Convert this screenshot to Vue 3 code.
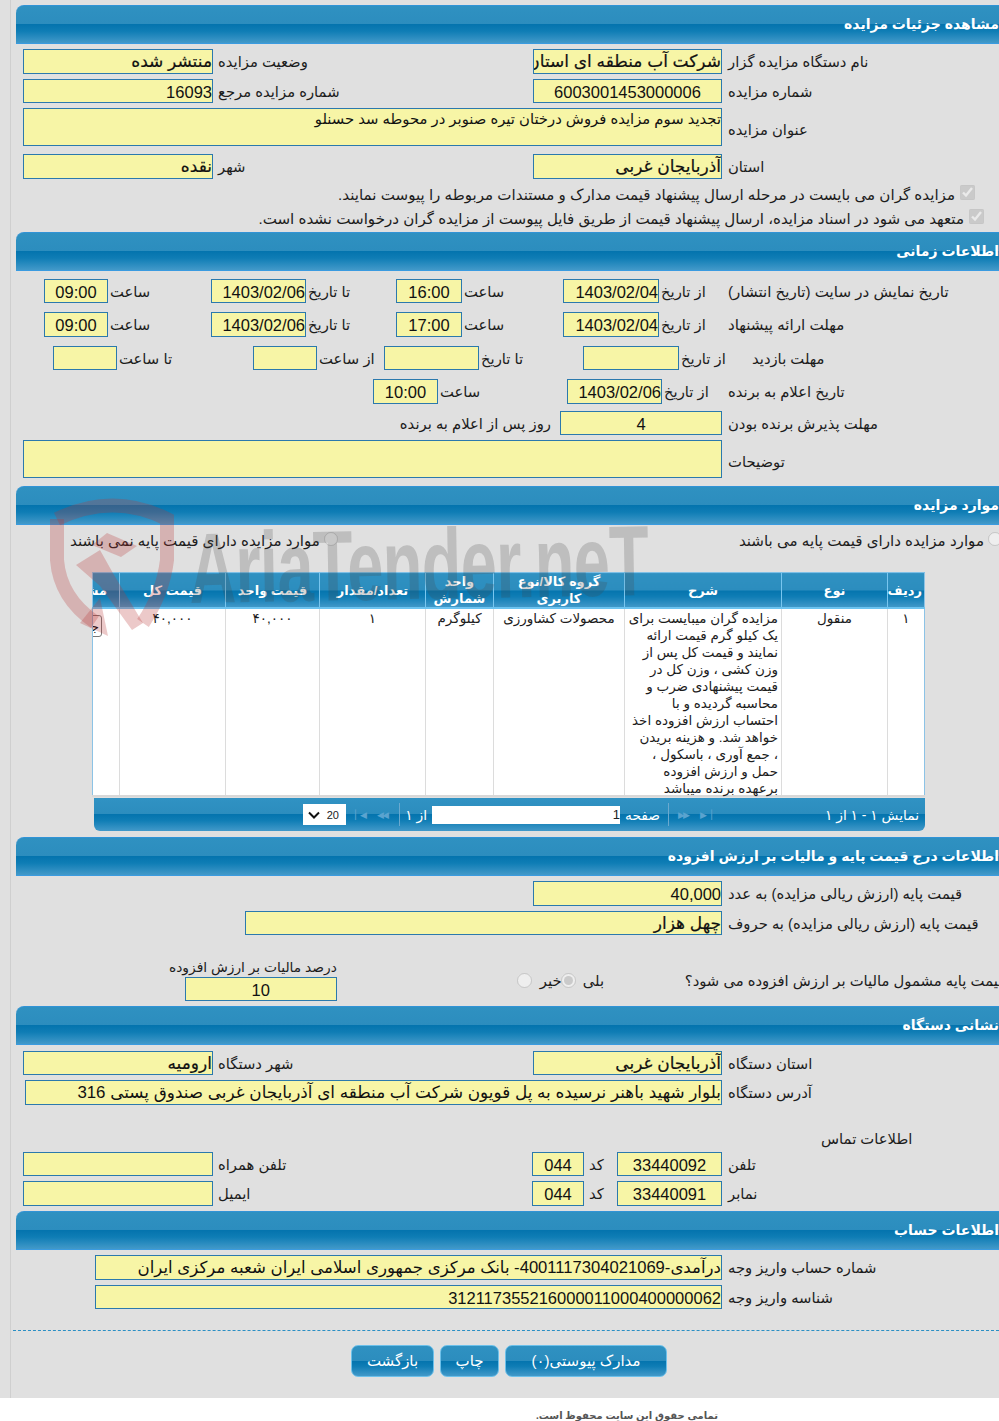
<script setup>
const cols = [
  { t: 'ردیف', w: 37 }, { t: 'نوع', w: 106 }, { t: 'شرح', w: 157 }, { t: 'گروه کالا/نوع کاربری', w: 131 },
  { t: 'واحد شمارش', w: 68 }, { t: 'تعداد/مقدار', w: 106 }, { t: 'قیمت واحد', w: 94 }, { t: 'قیمت کل', w: 106 }, { t: 'مشاهده', w: 27 }
]
const desc = [
  'مزایده گران میبایست برای', 'یک کیلو گرم قیمت ارائه', 'نمایند و قیمت کل پس از', 'وزن کشی ، وزن کل در',
  'قیمت پیشنهادی ضرب و', 'محاسبه گردیده و با', 'احتساب ارزش افزوده اخذ', 'خواهد شد. و هزینه بریدن',
  '، جمع آوری ، باسکول ،', 'حمل و ارزش افزوده', 'برعهده برنده میباشد'
].join('\n')
</script>

<template>
  <div class="page">
    <div class="main">
      <div class="head first"><span>مشاهده جزئیات مزایده</span></div>
      <div class="r two h25 mt5">
        <div class="f b">منتشر شده</div><div class="l">وضعیت مزایده</div>
        <div class="f b">شرکت آب منطقه ای استان آذربایجان غربی</div><div class="l">نام دستگاه مزایده گزار</div>
      </div>
      <div class="r two h24 mt5">
        <div class="f">16093</div><div class="l">شماره مزایده مرجع</div>
        <div class="f c">6003001453000006</div><div class="l">شماره مزایده</div>
      </div>
      <div class="r wide h38 mt5">
        <div class="f top">تجدید سوم مزایده فروش درختان تیره صنوبر در محوطه سد حسنلو</div><div class="l">عنوان مزایده</div>
      </div>
      <div class="r two h25 mt8">
        <div class="f b">نقده</div><div class="l">شهر</div>
        <div class="f b">آذربایجان غربی</div><div class="l">استان</div>
      </div>
      <div class="check one"><input type="checkbox" checked disabled><span>مزایده گران می بایست در مرحله ارسال پیشنهاد قیمت مدارک و مستندات مربوطه را پیوست نمایند.</span></div>
      <div class="check two-c"><input type="checkbox" checked disabled><span>متعهد می شود در اسناد مزایده، ارسال پیشنهاد قیمت از طریق فایل پیوست از مزایده گران درخواست نشده است.</span></div>

      <div class="head second"><span>اطلاعات زمانی</span></div>
      <div class="r time tight h24 mt8">
        <div class="f c">09:00</div><div class="l">ساعت</div>
        <div class="f">1403/02/06</div><div class="l">تا تاریخ</div>
        <div class="f c">16:00</div><div class="l">ساعت</div>
        <div class="f">1403/02/04</div><div class="l">از تاریخ</div>
        <div class="l">تاریخ نمایش در سایت (تاریخ انتشار)</div>
      </div>
      <div class="r time tight h25 mt9">
        <div class="f c">09:00</div><div class="l">ساعت</div>
        <div class="f">1403/02/06</div><div class="l">تا تاریخ</div>
        <div class="f c">17:00</div><div class="l">ساعت</div>
        <div class="f">1403/02/04</div><div class="l">از تاریخ</div>
        <div class="l">مهلت ارائه پیشنهاد</div>
      </div>
      <div class="r visit tight h24 mt9">
        <div class="f"></div><div class="l">تا ساعت</div>
        <div class="f"></div><div class="l">از ساعت</div>
        <div class="f"></div><div class="l">تا تاریخ</div>
        <div class="f"></div><div class="l">از تاریخ</div>
        <div class="l">مهلت بازدید</div>
      </div>
      <div class="r winner tight h25 mt9">
        <div class="f c">10:00</div><div class="l">ساعت</div>
        <div class="f">1403/02/06</div><div class="l">از تاریخ</div>
        <div class="l">تاریخ اعلام به برنده</div>
      </div>
      <div class="r accept h24 mt7">
        <div class="l days">روز پس از اعلام به برنده</div>
        <div class="f c">4</div>
        <div class="l">مهلت پذیرش برنده بودن</div>
      </div>
      <div class="r wide h38 mt5">
        <div class="f"></div><div class="l">توضیحات</div>
      </div>

      <div class="head third"><span>موارد مزایده</span></div>
      <div class="radios">
        <div class="rad"><span>موارد مزایده دارای قیمت پایه نمی باشند</span><input type="radio" disabled></div>
        <div class="rad"><span>موارد مزایده دارای قیمت پایه می باشند</span><input type="radio" disabled></div>
      </div>
      <div class="grid-wrap">
        <table class="grid" dir="rtl">
          <colgroup><col v-for="c in cols" :key="c.t" :width="c.w"></colgroup>
          <thead>
            <tr><th v-for="c in cols" :key="c.t"><div class="th">{{ c.t }}</div></th></tr>
          </thead>
          <tbody>
            <tr>
              <td class="ctr">۱</td>
              <td class="ctr">منقول</td>
              <td class="desc"><div class="dtext">{{ desc }}</div></td>
              <td class="ctr">محصولات کشاورزی</td>
              <td class="ctr">کیلوگرم</td>
              <td class="ctr">۱</td>
              <td class="ctr">۴۰,۰۰۰</td>
              <td class="ctr">۴۰,۰۰۰</td>
              <td class="clip"><button class="mini">جزئیات</button></td>
            </tr>
          </tbody>
        </table>
        <div class="pager">
          <div class="select"><svg width="12" height="8" viewBox="0 0 12 8"><path d="M1 1.5l5 5 5-5" fill="none" stroke="#111" stroke-width="2"/></svg><span>20</span></div>
          <div class="arrows"><i>▏◀</i><i>◀◀</i></div>
          <div class="sep"></div>
          <div class="pg">از ۱</div>
          <div class="pinput">1</div>
          <div class="pg pw">صفحه</div>
          <div class="sep"></div>
          <div class="arrows"><i>▶▶</i><i>▶▕</i></div>
          <div class="show">نمایش ۱ - ۱ از ۱</div>
        </div>
      </div>

      <div class="head fourth"><span>اطلاعات درج قیمت پایه و مالیات بر ارزش افزوده</span></div>
      <div class="r two h25 mt5">
        <div></div><div></div>
        <div class="f">40,000</div><div class="l">قیمت پایه (ارزش ریالی مزایده) به عدد</div>
      </div>
      <div class="r price h24 mt5">
        <div class="f b">چهل هزار</div><div class="l">قیمت پایه (ارزش ریالی مزایده) به حروف</div>
      </div>
      <div class="tax">
        <div class="taxcol">
          <div class="taxl">درصد مالیات بر ارزش افزوده</div>
          <div class="f c taxf">10</div>
        </div>
        <div class="opts">
          <input type="radio" disabled><span class="no">خیر</span>
          <input type="radio" checked disabled><span class="yes">بلی</span>
        </div>
        <div class="q">قیمت پایه مشمول مالیات بر ارزش افزوده می شود؟</div>
      </div>

      <div class="head fifth"><span>نشانی دستگاه</span></div>
      <div class="r two h24 mt6">
        <div class="f b">ارومیه</div><div class="l">شهر دستگاه</div>
        <div class="f b">آذربایجان غربی</div><div class="l">استان دستگاه</div>
      </div>
      <div class="r addr h25 mt5">
        <div class="f lg">بلوار شهید باهنر نرسیده به پل قویون شرکت آب منطقه ای آذربایجان غربی صندوق پستی 316</div><div class="l">آدرس دستگاه</div>
      </div>
      <div class="contact">اطلاعات تماس</div>
      <div class="r phone h24">
        <div class="f"></div><div class="l">تلفن همراه</div>
        <div class="f c">044</div><div class="l">کد</div>
        <div class="f c">33440092</div><div class="l">تلفن</div>
      </div>
      <div class="r phone h25 mt5">
        <div class="f"></div><div class="l">ایمیل</div>
        <div class="f c">044</div><div class="l">کد</div>
        <div class="f c">33440091</div><div class="l">نمابر</div>
      </div>

      <div class="head sixth"><span>اطلاعات حساب</span></div>
      <div class="r acct h25 mt5">
        <div class="f md">درآمدی-4001117304021069- بانک مرکزی جمهوری اسلامی ایران شعبه مرکزی ایران</div><div class="l">شماره حساب واریز وجه</div>
      </div>
      <div class="r acct h24 mt5">
        <div class="f">312117355216000011000400000062</div><div class="l">شناسه واریز وجه</div>
      </div>
      <div class="dash"></div>
      <div class="btns">
        <button class="btn bk">بازگشت</button>
        <button class="btn pr">چاپ</button>
        <button class="btn docs">مدارک پیوستی(۰)</button>
      </div>
    </div>
    <div class="foot">تمامی حقوق این سایت محفوظ است.</div>

    <div class="mark" aria-hidden="true">
      <svg class="shield" width="130" height="150" viewBox="0 0 130 150">
        <g fill="none" stroke="rgba(185,55,55,.27)" stroke-width="14">
          <path d="M7 21 Q63 -6 117 21 L117 62 Q113 95 93 125"/>
          <path d="M7 21 L7 62 Q10 100 45 124"/>
        </g>
        <g fill="rgba(185,55,55,.27)">
          <path d="M30 125 L58 138 L50 100Z"/>
          <path d="M26 67 L50 52 L64 77 L93 125 L82 132 L50 88Z"/>
          <path d="M42 47 L57 35 L87 48 L71 59Z"/>
        </g>
      </svg>
      <div class="word">AriaTender.neT</div>
    </div>
  </div>
</template>

<style>
html, body { margin: 0; padding: 0; background: #fff; }
</style>

<style scoped>
.page { width: 999px; height: 1421px; overflow: hidden; position: relative; background: #fff; font-family: "Liberation Sans", "DejaVu Sans", sans-serif; color: #111; }
.main { height: 1398px; overflow: hidden; box-sizing: border-box; padding-top: 5px; background: linear-gradient(90deg, #e0e0e0 10px, #cfcfcf 10px, #cfcfcf 11px, #e0e0e0 11px); }
.head { box-sizing: border-box; height: 39px; margin-left: 16px; width: 990px; border-radius: 8px 0 0 0; border-top: 1px solid #3193d6; border-bottom: 1px solid #3a9be0; background: linear-gradient(#2f91c1 0, #2c8dbe 49%, #0474ae 50%, #0f7db5 68%, #4299c9 100%); direction: rtl; color: #fff; font: bold 14px/36px "Liberation Sans", "DejaVu Sans", sans-serif; padding-right: 7px; white-space: nowrap; }
.second { margin-top: 1px; }
.third { margin-top: 8px; }
.fourth { margin-top: 6px; }
.fifth { margin-top: 5px; }
.sixth { margin-top: 5px; }

.r { display: grid; box-sizing: border-box; width: 999px; }
.two { grid-template-columns: 190px 320px 189px 1fr; padding-left: 23px; }
.wide { grid-template-columns: 699px 1fr; padding-left: 23px; }
.time { grid-template-columns: 64px 103px 95px 90px 66px 101px 96px 69px 1fr; padding-left: 44px; }
.visit { grid-template-columns: 64px 136px 64px 67px 95px 104px 96px 73px 1fr; padding-left: 53px; }
.winner { grid-template-columns: 65px 129px 95px 66px 1fr; padding-left: 373px; }
.accept { grid-template-columns: 537px 162px 1fr; padding-left: 23px; }
.price { grid-template-columns: 477px 1fr; padding-left: 245px; }
.addr { grid-template-columns: 697px 1fr; padding-left: 25px; }
.phone { grid-template-columns: 190px 319px 52px 33px 105px 1fr; padding-left: 23px; }
.acct { grid-template-columns: 627px 1fr; padding-left: 95px; }
.h24 { height: 24px; grid-template-rows: 24px; }
.h25 { height: 25px; grid-template-rows: 25px; }
.h38 { height: 38px; grid-template-rows: 38px; }
.mt5 { margin-top: 5px; }
.mt6 { margin-top: 6px; }
.mt7 { margin-top: 7px; }
.mt8 { margin-top: 8px; }
.mt9 { margin-top: 9px; }

.f { box-sizing: border-box; border: 1px solid #2b79ad; background: #f7f5a6; direction: rtl; text-align: right; white-space: nowrap; overflow: hidden; font-size: 16.5px; line-height: 24px; color: #111; }
.b { font-size: 17px; -webkit-text-stroke: 0.2px #111; }
.lg { font-size: 16.85px; }
.md { font-size: 16.6px; }
.c { text-align: center; }
.top { font-size: 14.8px; line-height: 20px; }
.l { direction: rtl; text-align: left; padding-left: 5px; font-size: 14.8px; line-height: 26px; white-space: nowrap; color: #1c1c1c; }
.l:last-child { padding-left: 6px; }
.tight .l { padding-left: 2px; }
.tight .l:last-child { padding-left: 0; }
.time .l:last-child { font-size: 15.1px; }
.days { text-align: right; padding: 0 9px 0 0; }
.h38 .l { line-height: 44px; }

.check { direction: rtl; display: flex; align-items: center; height: 24px; font-size: 15.1px; white-space: nowrap; color: #1c1c1c; }
.check input { width: 15px; height: 15px; margin: 0 0 6px 5px; }
.check span { margin-top: 0; position: relative; top: 0; }
.one { margin-top: 4px; padding-right: 24px; }
.two-c { padding-right: 15px; }

.radios { display: flex; justify-content: space-between; height: 47px; box-sizing: border-box; padding: 7px 0 0 70px; margin-right: -3px; font-size: 15.1px; line-height: 18px; }
.rad { display: flex; direction: rtl; align-items: flex-start; white-space: nowrap; color: #1c1c1c; }
.rad input { width: 14px; height: 14px; margin: 0 0 0 4px; order: -1; }

.grid-wrap { margin-left: 92px; width: 833px; }
.grid { width: 833px; table-layout: fixed; border-collapse: collapse; background: #fff; border-left: 1px solid #8cc3e6; border-right: 1px solid #8cc3e6; border-top: 1px solid #7ec0e6; font-size: 13.5px; }
.grid th { height: 34px; padding: 0; border-left: 1px solid #79c6ef; background: linear-gradient(#2f91c1 0, #2c8dbe 49%, #0474ae 50%, #0f7db5 68%, #4299c9 100%); border-bottom: 2px solid #6cc3f0; color: #fff; font-size: 13px; font-weight: 700; line-height: 17px; overflow: hidden; white-space: normal; }
.grid th:last-child { border-left: 0; white-space: nowrap; text-align: right; }
.grid th:last-child .th { padding: 0 12px 0 0; }
.th { padding: 0 2px; }
.grid td { height: 185px; padding: 0; vertical-align: top; border-left: 1px solid #dcdcdc; border-bottom: 2px solid #d8d8d8; line-height: 17px; color: #1c1c1c; }
.grid td:last-child { border-left: 0; }
.ctr { text-align: center; padding-top: 1px !important; }
.desc { padding: 0 3px 0 0 !important; }
.dtext { box-sizing: border-box; height: 185px; padding-top: 1px; white-space: pre-line; }
.clip { overflow: hidden; }
.mini { display: block; box-sizing: border-box; width: 40px; height: 22px; margin: 6px 17px 0 0; padding: 0 2px; border: 1px solid #777; border-radius: 3px; background: #fff; font: 13px "Liberation Sans", "DejaVu Sans", sans-serif; text-align: right; white-space: nowrap; overflow: hidden; }

.pager { box-sizing: border-box; height: 33px; margin: 1px 0 0 2px; width: 831px; padding-left: 209px; border-radius: 0 0 6px 6px; background: linear-gradient(#3092c3 0, #2c8dbe 49%, #0474ae 50%, #0f7db5 68%, #4299c9 100%); display: flex; align-items: center; color: #fff; font-size: 13.8px; }
.select { box-sizing: border-box; width: 43px; height: 21px; background: #fff; color: #222; display: flex; align-items: center; justify-content: space-between; padding: 0 7px 0 5px; font-size: 11px; }
.arrows { display: flex; gap: 8px; margin-left: 9px; color: #5aa3cf; font-size: 9px; letter-spacing: -2px; }
.arrows i { font-style: normal; display: block; width: 14px; }
.sep { width: 1px; height: 23px; margin-left: 8px; background: #6aa9cf; }
.pg { margin-left: 8px; direction: rtl; width: 19px; white-space: nowrap; }
.pinput { box-sizing: border-box; margin-left: 5px; width: 188px; height: 18px; background: #fff; color: #222; text-align: right; font-size: 13px; line-height: 18px; }
.pw { width: 35px; margin-left: 5px; }
.show { margin-left: auto; padding-right: 6px; direction: rtl; white-space: nowrap; }

.tax { display: flex; box-sizing: border-box; height: 66px; align-items: flex-start; }
.taxcol { width: 168px; margin-left: 169px; padding-top: 24px; display: flex; flex-direction: column; align-items: flex-end; }
.taxl { direction: rtl; white-space: nowrap; font-size: 13.8px; line-height: 18px; height: 18px; color: #1c1c1c; }
.taxf { width: 152px; height: 24px; }
.opts { display: flex; align-items: center; margin: 37px 0 0 180px; font-size: 14.8px; color: #1c1c1c; }
.opts input { width: 15px; height: 15px; margin: 0; }
.no { width: 21px; margin: 0 0 0 8px; text-align: center; }
.yes { width: 25px; margin-left: 7px; }
.q { margin: 36px 0 0 77px; direction: rtl; white-space: nowrap; font-size: 14.8px; line-height: 20px; color: #1c1c1c; }

.contact { height: 24px; margin-top: 23px; padding-left: 821px; direction: ltr; font-size: 14.8px; line-height: 22px; white-space: nowrap; color: #1c1c1c; }
.dash { margin: 21px 0 0 13px; border-top: 1px dashed #2b8fc4; }
.btns { display: flex; padding-left: 351px; gap: 6px; margin-top: 14px; }
.btn { box-sizing: border-box; height: 32px; border: 1px solid #6cc0ea; border-radius: 7px; color: #fff; font: 15px "Liberation Sans", "DejaVu Sans", sans-serif; padding: 0; background: linear-gradient(#2f91c1 0, #2c8dbe 49%, #0474ae 50%, #0f7db5 68%, #4299c9 100%); }
.bk { width: 83px; }
.pr { width: 59px; }
.docs { width: 162px; }
.foot { height: 23px; direction: rtl; padding: 11px 281px 0 0; box-sizing: border-box; font-size: 10px; font-weight: 700; color: #555; line-height: 13px; white-space: nowrap; text-align: right; }

.mark { position: absolute; left: 50px; top: 498px; width: 620px; height: 160px; pointer-events: none; }
.shield { position: absolute; left: 0; top: 0; }
.word { position: absolute; left: 140px; top: 14px; font: 700 100px/112px "Liberation Sans", sans-serif; color: rgba(70,70,70,.22); transform-origin: left bottom; transform: rotate(-1deg) scaleX(.65); white-space: nowrap; letter-spacing: -1px; }
</style>
